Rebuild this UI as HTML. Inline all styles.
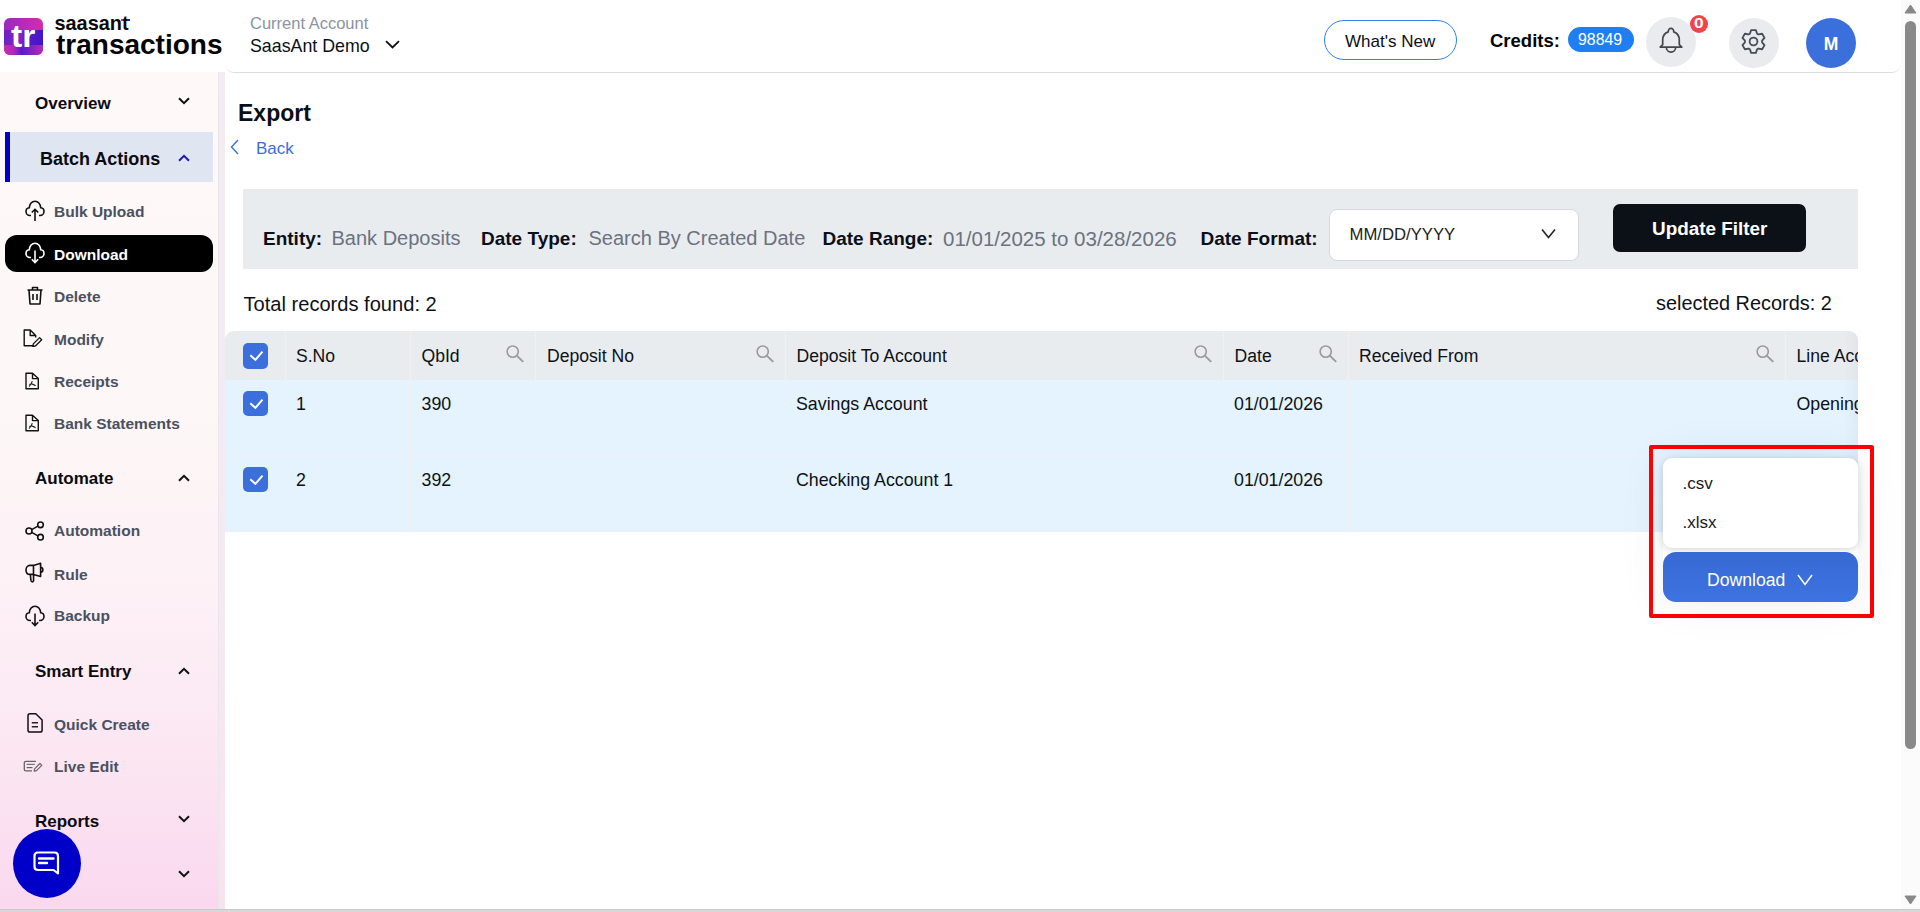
<!DOCTYPE html>
<html>
<head>
<meta charset="utf-8">
<style>
*{box-sizing:border-box;margin:0;padding:0}
html,body{width:1920px;height:912px;overflow:hidden;background:#fff;font-family:"Liberation Sans",sans-serif;color:#0b0f17}
.abs{position:absolute}
.t{position:absolute;white-space:nowrap;line-height:1}
svg{position:absolute;overflow:visible}
/* header */
#hdr{left:225px;top:0;width:1676px;height:73px;border-bottom:1px solid #dddddd;border-radius:0 0 9px 9px;background:#fff}
#logo{left:4px;top:18px;width:39px;height:37px;border-radius:6px;overflow:hidden;background:linear-gradient(90deg,#9a28c2 0%,#b42ab9 45%,#d92aad 100%)}
#logo .mid{position:absolute;left:0;top:12px;width:39px;height:15px;background:linear-gradient(90deg,#6c21c6 0%,#8a25c0 40%,#5a1bc8 60%,#4214ca 100%)}
#logo .bot{position:absolute;left:0;top:27px;width:39px;height:10px;background:linear-gradient(90deg,#c62bb5 0%,#b02ab9 25%,#5a1cc8 45%,#7a22c2 65%,#b82ab6 100%)}
/* sidebar */
#side{left:0;top:72px;width:218px;height:837px;background:linear-gradient(to bottom,#fef9f8 0%,#fdf7f7 40%,#fdf1f6 62%,#fbe6f2 82%,#fad8ef 100%)}
#strip{left:218px;top:72px;width:7px;height:837px;background:linear-gradient(to bottom,#f4ecf3 0%,#f4ebf2 50%,#f7e3f0 100%);border-left:1px solid #ebe6e9}
.sh{position:absolute;left:35px;font-weight:700;font-size:17px;color:#0b0b0f;line-height:1;white-space:nowrap}
.si{position:absolute;left:54px;font-weight:700;font-size:15.5px;color:#4a5161;line-height:1;white-space:nowrap}
/* filter */
#filter{left:243px;top:189px;width:1615px;height:80px;background:#e9ecef}
.fl{position:absolute;top:228.5px;font-size:19px;font-weight:700;color:#0b0f17;line-height:1;white-space:nowrap}
.fv{position:absolute;top:228.2px;font-size:20px;color:#6b7280;line-height:1;white-space:nowrap}
/* table */
#thead{left:225px;top:331px;width:1633px;height:49px;background:#e9ecef;border-radius:9px 9px 0 0}
#rows{left:225px;top:380px;width:1633px;height:152px;background:#e4f3fe}
.vsep{position:absolute;top:331px;width:1px;height:49px;background:#f0f0f0}
.vsep2{position:absolute;top:380px;width:1px;height:152px;background:#f0f0f0}
.hsep{position:absolute;left:225px;width:1633px;height:1px;background:#f0f0f0}
.cb{position:absolute;left:243px;width:25px;height:25px;border-radius:5px;background:#3b6fdc}
.th{position:absolute;top:348.1px;font-size:17.6px;color:#0d1117;line-height:1;white-space:nowrap}
.td{position:absolute;font-size:17.8px;color:#0d1117;line-height:1;white-space:nowrap}
/* scrollbar */
#vs{left:1901px;top:0;width:19px;height:909px;background:#fbfbfb}
#thumb{left:1905px;top:21px;width:11px;height:728px;background:#898989;border-radius:6px}
#hs{left:0;top:909px;width:1920px;height:3px;background:#d8d8d8;border-top:1px solid #c9c9c9}
</style>
</head>
<body>
<!-- header -->
<div class="abs" id="hdr"></div>
<div class="abs" id="logo"><div class="mid"></div><div class="bot"></div></div>
<div class="t" style="left:11px;top:19.9px;font-size:32px;font-weight:700;color:#fff;transform:scaleX(1.05);transform-origin:left top">tr</div>
<div class="t" style="left:54.5px;top:13.9px;font-size:19.9px;font-weight:700;color:#0b0b0b">saasant</div>
<div class="abs" style="left:120.6px;top:19.2px;width:2.8px;height:2px;background:#d21fc0"></div><div class="abs" style="left:126.6px;top:18.8px;width:3.2px;height:2.4px;background:#1a14e0"></div>
<div class="t" style="left:56px;top:31.2px;font-size:28px;font-weight:700;color:#050505">transactions</div>
<div class="t" style="left:250px;top:15.3px;font-size:16.5px;color:#8a94a3">Current Account</div>
<div class="t" style="left:250px;top:37.5px;font-size:17.8px;color:#0b0f17">SaasAnt Demo</div>
<svg style="left:385px;top:40px" width="15" height="9" viewBox="0 0 15 9"><path d="M1 1.2 L7.5 7.5 L14 1.2" fill="none" stroke="#111" stroke-width="1.8"/></svg>

<div class="abs" style="left:1324px;top:20px;width:133px;height:40px;border:1.5px solid #2f80ed;border-radius:20px"></div>
<div class="t" style="left:1345px;top:32.9px;font-size:17px;color:#0b0f17">What's New</div>
<div class="t" style="left:1490px;top:31.6px;font-size:18.5px;font-weight:700;color:#050505">Credits:</div>
<div class="abs" style="left:1568px;top:27px;width:66px;height:25px;border-radius:13px;background:#1f7ff0"></div>
<div class="t" style="left:1578px;top:32.4px;font-size:15.9px;color:#fff;font-weight:400">98849</div>

<div class="abs" style="left:1646px;top:17px;width:50px;height:50px;border-radius:50%;background:#e9ebee"></div>
<svg style="left:1652px;top:22px" width="38" height="38" viewBox="0 0 38 38"><path d="M16.3 9.9 C15.9 5.2 22.1 5.2 21.7 9.9 C25.2 11.1 27.3 14.2 27.3 18 V22.6 L29.8 25.1 H8.2 L10.7 22.6 V18 C10.7 14.2 12.8 11.1 16.3 9.9 Z" fill="none" stroke="#41474f" stroke-width="1.7" stroke-linejoin="round"/><path d="M14.3 25.3 A4.7 4.9 0 0 0 23.7 25.3" fill="none" stroke="#41474f" stroke-width="1.7"/></svg>
<div class="abs" style="left:1690px;top:15px;width:18px;height:18px;border-radius:50%;background:#f0434a"></div>
<div class="t" style="left:1693.5px;top:15.9px;font-size:14.5px;font-weight:700;color:#fff;transform:scaleX(1.2);transform-origin:left top">0</div>

<div class="abs" style="left:1729px;top:18px;width:50px;height:50px;border-radius:50%;background:#e9ebee"></div>
<svg style="left:1741px;top:29px" width="25" height="25" viewBox="0 0 25 25"><path d="M8.90 4.69 L10.10 1.15 L14.90 1.15 L16.10 4.69 L17.46 5.48 L21.13 4.75 L23.53 8.90 L21.06 11.71 L21.06 13.29 L23.53 16.10 L21.13 20.25 L17.46 19.52 L16.10 20.31 L14.90 23.85 L10.10 23.85 L8.90 20.31 L7.54 19.52 L3.87 20.25 L1.47 16.10 L3.94 13.29 L3.94 11.71 L1.47 8.90 L3.87 4.75 L7.54 5.48 Z" fill="none" stroke="#474d57" stroke-width="1.8" stroke-linejoin="round"/><circle cx="12.5" cy="12.5" r="3.9" fill="none" stroke="#474d57" stroke-width="1.8"/></svg>

<div class="abs" style="left:1806px;top:18px;width:50px;height:50px;border-radius:50%;background:#3b6fdc"></div>
<div class="t" style="left:1823.8px;top:36px;font-size:17.5px;font-weight:700;color:#fff">M</div>

<!-- sidebar -->
<div class="abs" id="side"></div>
<div class="abs" id="strip"></div>

<div class="sh" style="top:95.2px">Overview</div>
<svg style="left:178px;top:97px" width="12" height="8" viewBox="0 0 12 8"><path d="M1 1.2 L6 6.2 L11 1.2" fill="none" stroke="#111" stroke-width="2"/></svg>

<div class="abs" style="left:5px;top:132px;width:208px;height:50px;background:#dfe6f1"></div>
<div class="abs" style="left:5px;top:132px;width:5px;height:50px;background:#0000c2"></div>
<div class="t" style="left:40px;top:150.2px;font-size:18px;font-weight:700;color:#0b0b0f">Batch Actions</div>
<svg style="left:178px;top:154px" width="12" height="8" viewBox="0 0 12 8"><path d="M1 6.8 L6 1.8 L11 6.8" fill="none" stroke="#1a1ab8" stroke-width="2"/></svg>

<!-- bulk upload -->
<svg style="left:25px;top:200px" width="20" height="22" viewBox="0 0 20 22"><path d="M6 15.5 H5 C2.5 15.5 1 13.5 1 11.5 C1 9.5 2.5 8 4.3 7.8 C4.5 4 7 1.2 10 1.2 C13 1.2 15.5 4 15.7 7.8 C17.5 8 19 9.5 19 11.5 C19 13.5 17.5 15.5 15 15.5 H14" fill="none" stroke="#111" stroke-width="1.6"/><path d="M10 21 V9.5 M6.8 12.5 L10 9.3 L13.2 12.5" fill="none" stroke="#111" stroke-width="1.6"/></svg>
<div class="si" style="top:203.9px">Bulk Upload</div>

<div class="abs" style="left:5px;top:235px;width:208px;height:37px;border-radius:12px;background:#000"></div>
<svg style="left:25px;top:242px" width="20" height="22" viewBox="0 0 20 22"><path d="M6 15.5 H5 C2.5 15.5 1 13.5 1 11.5 C1 9.5 2.5 8 4.3 7.8 C4.5 4 7 1.2 10 1.2 C13 1.2 15.5 4 15.7 7.8 C17.5 8 19 9.5 19 11.5 C19 13.5 17.5 15.5 15 15.5 H14" fill="none" stroke="#fff" stroke-width="1.6"/><path d="M10 8.5 V20.5 M6.8 17.3 L10 20.5 L13.2 17.3" fill="none" stroke="#fff" stroke-width="1.6"/></svg>
<div class="si" style="top:246.6px;color:#fff">Download</div>

<svg style="left:26px;top:286px" width="18" height="19" viewBox="0 0 18 19"><path d="M1.5 4 H16.5 M6.5 4 V1.5 H11.5 V4 M3 4 L4 18 H14 L15 4 M7 8 V14 M11 8 V14" fill="none" stroke="#111" stroke-width="1.6" stroke-linejoin="round"/></svg>
<div class="si" style="top:288.7px">Delete</div>

<svg style="left:22px;top:328px" width="22" height="20" viewBox="0 0 22 20"><path d="M11.6 17.7 H2.2 V2 H8.2 L13.7 7.5 V9.6 M8.2 2 V7.5 H13.7" fill="none" stroke="#111" stroke-width="1.4" stroke-linejoin="round"/><path d="M10.8 18.4 L11.3 15.9 L17.6 9.6 L19.7 11.7 L13.4 18 Z" fill="none" stroke="#111" stroke-width="1.3" stroke-linejoin="round"/></svg>
<div class="si" style="top:331.9px">Modify</div>

<svg style="left:24px;top:371px" width="17" height="20" viewBox="0 0 17 20"><path d="M2 2.3 H8.5 L14.3 7.6 V17.8 H2 Z M8.5 2.3 V7.6 H14.3" fill="none" stroke="#111" stroke-width="1.4" stroke-linejoin="round"/><path d="M5 15.6 C6.5 14.2 7.8 12.2 8.3 10.2 M7.6 12.9 C9 13.3 10.4 14 11.6 14.8 M7.4 12.7 C6.6 13 5.9 13.3 5.3 13.6" fill="none" stroke="#222" stroke-width="1.1"/></svg>
<div class="si" style="top:373.7px">Receipts</div>

<svg style="left:24px;top:413px" width="17" height="20" viewBox="0 0 17 20"><path d="M2 2.3 H8.5 L14.3 7.6 V17.8 H2 Z M8.5 2.3 V7.6 H14.3" fill="none" stroke="#111" stroke-width="1.4" stroke-linejoin="round"/><path d="M5 15.6 C6.5 14.2 7.8 12.2 8.3 10.2 M7.6 12.9 C9 13.3 10.4 14 11.6 14.8 M7.4 12.7 C6.6 13 5.9 13.3 5.3 13.6" fill="none" stroke="#222" stroke-width="1.1"/></svg>
<div class="si" style="top:416.4px">Bank Statements</div>

<div class="sh" style="top:470px">Automate</div>
<svg style="left:178px;top:474px" width="12" height="8" viewBox="0 0 12 8"><path d="M1 6.8 L6 1.8 L11 6.8" fill="none" stroke="#111" stroke-width="2"/></svg>

<svg style="left:25px;top:521px" width="20" height="20" viewBox="0 0 20 20"><circle cx="4" cy="10" r="3" fill="none" stroke="#111" stroke-width="1.6"/><circle cx="15.5" cy="3.8" r="2.8" fill="none" stroke="#111" stroke-width="1.6"/><circle cx="15.5" cy="16.2" r="2.8" fill="none" stroke="#111" stroke-width="1.6"/><path d="M6.7 8.6 L12.9 5.1 M6.7 11.4 L12.9 14.9" stroke="#111" stroke-width="1.6"/></svg>
<div class="si" style="top:523.4px">Automation</div>

<svg style="left:24px;top:561px" width="22" height="23" viewBox="0 0 22 23"><path d="M9.5 4.4 H6 C3.6 4.4 2 6.3 2 8.9 C2 11.5 3.6 13.4 6 13.4 H9.5 Z M9.5 4.4 L16.6 2.3 V15.5 L9.5 13.4 M16.6 6.2 C19.6 6.5 19.6 11.2 16.6 11.5 M6.3 13.6 L7 19.7 C7.3 21.2 9.3 21.2 9.6 19.7 L9.5 13.6" fill="none" stroke="#111" stroke-width="1.6" stroke-linejoin="round"/></svg>
<div class="si" style="top:566.5px">Rule</div>

<svg style="left:25px;top:605px" width="20" height="22" viewBox="0 0 20 22"><path d="M6 15.5 H5 C2.5 15.5 1 13.5 1 11.5 C1 9.5 2.5 8 4.3 7.8 C4.5 4 7 1.2 10 1.2 C13 1.2 15.5 4 15.7 7.8 C17.5 8 19 9.5 19 11.5 C19 13.5 17.5 15.5 15 15.5 H14" fill="none" stroke="#111" stroke-width="1.6"/><path d="M10 8.5 V20.5 M6.8 17.3 L10 20.5 L13.2 17.3" fill="none" stroke="#111" stroke-width="1.6"/></svg>
<div class="si" style="top:608.1px">Backup</div>

<div class="sh" style="top:663.3px">Smart Entry</div>
<svg style="left:178px;top:667px" width="12" height="8" viewBox="0 0 12 8"><path d="M1 6.8 L6 1.8 L11 6.8" fill="none" stroke="#111" stroke-width="2"/></svg>

<svg style="left:26px;top:712px" width="18" height="22" viewBox="0 0 18 22"><path d="M4 1.8 H9.8 L16.1 8 V18 C16.1 19.3 15.3 20.1 14.1 20.1 H4 C2.8 20.1 2 19.3 2 18 V3.8 C2 2.6 2.8 1.8 4 1.8 Z" fill="none" stroke="#111" stroke-width="1.5" stroke-linejoin="round"/><path d="M5.8 10.8 H12 M5.8 14.8 H12" stroke="#222" stroke-width="1.5"/></svg>
<div class="si" style="top:716.5px">Quick Create</div>

<svg style="left:22px;top:759px" width="22" height="14" viewBox="0 0 22 14"><path d="M14 2.3 H4 C2.9 2.3 2.3 2.9 2.3 4 V10.2 C2.3 11.2 2.9 11.8 4 11.8 H10" fill="none" stroke="#666" stroke-width="1.3"/><path d="M4.6 5.4 H12.8" stroke="#6b7480" stroke-width="1.2"/><path d="M4.6 8.6 H10.5" stroke="#6a5d55" stroke-width="1.2"/><path d="M12.2 12.1 L12.6 9.8 L17.9 4.5 L19.8 6.4 L14.5 11.7 Z" fill="none" stroke="#666" stroke-width="1.2" stroke-linejoin="round"/></svg>
<div class="si" style="top:758.6px">Live Edit</div>

<div class="sh" style="top:812.8px">Reports</div>
<svg style="left:178px;top:815px" width="12" height="8" viewBox="0 0 12 8"><path d="M1 1.2 L6 6.2 L11 1.2" fill="none" stroke="#111" stroke-width="2"/></svg>
<svg style="left:178px;top:870px" width="12" height="8" viewBox="0 0 12 8"><path d="M1 1.2 L6 6.2 L11 1.2" fill="none" stroke="#111" stroke-width="2"/></svg>

<div class="abs" style="left:13px;top:829px;width:68px;height:69px;border-radius:50%;background:#0000c8"></div>
<svg style="left:33px;top:851px" width="28" height="26" viewBox="0 0 28 26"><path d="M5 1.5 H21.5 C23.5 1.5 25 3 25 5 V22.5 L20.5 19 H5 C3 19 1.5 17.5 1.5 15.5 V5 C1.5 3 3 1.5 5 1.5 Z" fill="none" stroke="#fff" stroke-width="2.2" stroke-linejoin="round"/><path d="M6 7.5 H20.5 M6 12 H14" stroke="#fff" stroke-width="2.4" stroke-linecap="round"/></svg>

<!-- main -->
<div class="t" style="left:238px;top:101.6px;font-size:23px;font-weight:700;color:#0b0f17">Export</div>
<svg style="left:230px;top:139px" width="9" height="16" viewBox="0 0 9 16"><path d="M8 1 L1.5 8 L8 15" fill="none" stroke="#3b6fdc" stroke-width="1.4"/></svg>
<div class="t" style="left:256px;top:139.9px;font-size:17px;color:#3b6fdc">Back</div>

<div class="abs" id="filter"></div>
<div class="fl" style="left:263px">Entity:</div>
<div class="fv" style="left:331.5px">Bank Deposits</div>
<div class="fl" style="left:481px">Date Type:</div>
<div class="fv" style="left:588.5px">Search By Created Date</div>
<div class="fl" style="left:822.5px">Date Range:</div>
<div class="fv" style="left:943px;font-size:20.5px;top:229.3px">01/01/2025 to 03/28/2026</div>
<div class="fl" style="left:1200.5px">Date Format:</div>
<div class="abs" style="left:1329px;top:209px;width:250px;height:52px;background:#fff;border:1px solid #d5d9de;border-radius:8px"></div>
<div class="t" style="left:1349.5px;top:227px;font-size:16.7px;color:#222">MM/DD/YYYY</div>
<svg style="left:1541px;top:228px" width="15" height="11" viewBox="0 0 15 11"><path d="M1 1.5 L7.5 9.5 L14 1.5" fill="none" stroke="#222" stroke-width="1.6"/></svg>
<div class="abs" style="left:1613px;top:204px;width:193px;height:48px;background:#0c1118;border-radius:7px"></div>
<div class="t" style="left:1652px;top:220.3px;font-size:18.9px;font-weight:700;color:#fff">Update Filter</div>

<div class="t" style="left:243.5px;top:294.2px;font-size:20.1px;color:#0d1117">Total records found: 2</div>
<div class="t" style="left:1656px;top:294px;font-size:19.9px;color:#0d1117">selected Records: 2</div>

<!-- table -->
<div class="abs" id="thead"></div>
<div class="abs" id="rows"></div>
<div class="hsep" style="top:455px"></div>
<div class="vsep" style="left:285px"></div>
<div class="vsep" style="left:410px"></div>
<div class="vsep" style="left:535px"></div>
<div class="vsep" style="left:785px"></div>
<div class="vsep" style="left:1223px"></div>
<div class="vsep" style="left:1348px"></div>
<div class="vsep" style="left:1785px"></div>

<div class="vsep2" style="left:285px"></div><div class="vsep2" style="left:410px"></div><div class="vsep2" style="left:535px"></div><div class="vsep2" style="left:785px"></div><div class="vsep2" style="left:1223px"></div><div class="vsep2" style="left:1348px"></div><div class="vsep2" style="left:1785px"></div>
<div class="cb" style="top:343px;height:26px"></div>
<svg style="left:249px;top:350px" width="15" height="12" viewBox="0 0 15 12"><path d="M1.3 5.3 L6.4 9.8 L13.5 1.7" fill="none" stroke="#fff" stroke-width="2"/></svg>
<div class="cb" style="top:391px"></div>
<svg style="left:249px;top:398px" width="15" height="12" viewBox="0 0 15 12"><path d="M1.3 5.3 L6.4 9.8 L13.5 1.7" fill="none" stroke="#fff" stroke-width="2"/></svg>
<div class="cb" style="top:467px"></div>
<svg style="left:249px;top:474px" width="15" height="12" viewBox="0 0 15 12"><path d="M1.3 5.3 L6.4 9.8 L13.5 1.7" fill="none" stroke="#fff" stroke-width="2"/></svg>

<div class="th" style="left:296px">S.No</div>
<div class="th" style="left:421.5px">QbId</div>
<div class="th" style="left:547px">Deposit No</div>
<div class="th" style="left:796.5px">Deposit To Account</div>
<div class="th" style="left:1234.5px">Date</div>
<div class="th" style="left:1359px">Received From</div>
<div class="abs" style="left:1786px;top:331px;width:72px;height:201px;overflow:hidden">
  <div class="th" style="left:10.5px;top:17.1px">Line Account</div>
  <div class="td" style="left:10.5px;top:64.5px">Opening Balance</div>
</div>

<svg class="srch" style="left:506px;top:345px" width="19" height="19" viewBox="0 0 19 19"><circle cx="6.7" cy="6.6" r="5.6" fill="none" stroke="#9a9a9a" stroke-width="1.6"/><path d="M10.8 10.6 L17.2 16.9" stroke="#9a9a9a" stroke-width="1.9"/></svg>
<svg class="srch" style="left:756px;top:345px" width="19" height="19" viewBox="0 0 19 19"><circle cx="6.7" cy="6.6" r="5.6" fill="none" stroke="#9a9a9a" stroke-width="1.6"/><path d="M10.8 10.6 L17.2 16.9" stroke="#9a9a9a" stroke-width="1.9"/></svg>
<svg class="srch" style="left:1194px;top:345px" width="19" height="19" viewBox="0 0 19 19"><circle cx="6.7" cy="6.6" r="5.6" fill="none" stroke="#9a9a9a" stroke-width="1.6"/><path d="M10.8 10.6 L17.2 16.9" stroke="#9a9a9a" stroke-width="1.9"/></svg>
<svg class="srch" style="left:1319px;top:345px" width="19" height="19" viewBox="0 0 19 19"><circle cx="6.7" cy="6.6" r="5.6" fill="none" stroke="#9a9a9a" stroke-width="1.6"/><path d="M10.8 10.6 L17.2 16.9" stroke="#9a9a9a" stroke-width="1.9"/></svg>
<svg class="srch" style="left:1756px;top:345px" width="19" height="19" viewBox="0 0 19 19"><circle cx="6.7" cy="6.6" r="5.6" fill="none" stroke="#9a9a9a" stroke-width="1.6"/><path d="M10.8 10.6 L17.2 16.9" stroke="#9a9a9a" stroke-width="1.9"/></svg>

<div class="td" style="left:296px;top:395.5px">1</div>
<div class="td" style="left:421.5px;top:395.5px">390</div>
<div class="td" style="left:796px;top:395.5px">Savings Account</div>
<div class="td" style="left:1234px;top:395.5px">01/01/2026</div>
<div class="td" style="left:296px;top:472px">2</div>
<div class="td" style="left:421.5px;top:472px">392</div>
<div class="td" style="left:796px;top:472px">Checking Account 1</div>
<div class="td" style="left:1234px;top:472px">01/01/2026</div>

<div class="abs" style="left:1844px;top:331px;width:14px;height:201px;border-top-right-radius:9px;background:linear-gradient(to right,rgba(120,130,150,0),rgba(120,130,150,0.07))"></div>
<!-- download dropdown -->
<div class="abs" style="left:1663px;top:458px;width:195px;height:144px;border-radius:12px;box-shadow:0 0 48px rgba(30,40,60,0.075)"></div>
<div class="abs" style="left:1663px;top:458px;width:195px;height:90px;background:#fff;border-radius:9px;box-shadow:0 2px 6px rgba(0,0,0,0.12),0 0 14px rgba(0,0,0,0.05)"></div>
<div class="t" style="left:1682.5px;top:474.5px;font-size:17px;color:#1a1a1a">.csv</div>
<div class="t" style="left:1682.5px;top:514.3px;font-size:17px;color:#1a1a1a">.xlsx</div>
<div class="abs" style="left:1663px;top:552px;width:195px;height:50px;background:linear-gradient(#3769d4,#3d73e0);border-radius:13px"></div>
<div class="t" style="left:1707px;top:571.8px;font-size:17.6px;color:#fff">Download</div>
<svg style="left:1797px;top:574px" width="16" height="12" viewBox="0 0 16 12"><path d="M1 1 L8 10.5 L15 1" fill="none" stroke="#fff" stroke-width="1.5"/></svg>
<div class="abs" style="left:1649px;top:445px;width:225px;height:173px;border:4.5px solid #ff0000;border-radius:2px"></div>

<!-- scrollbars -->
<div class="abs" id="vs"></div>
<svg style="left:1904px;top:4px" width="13" height="10" viewBox="0 0 13 10"><path d="M6.5 1 L12 9 H1 Z" fill="#898989" stroke="#898989" stroke-width="1" stroke-linejoin="round"/></svg>
<div class="abs" id="thumb"></div>
<svg style="left:1904px;top:895px" width="13" height="10" viewBox="0 0 13 10"><path d="M1 1 H12 L6.5 9 Z" fill="#898989" stroke="#898989" stroke-width="1" stroke-linejoin="round"/></svg>
<div class="abs" id="hs"></div>
</body>
</html>
